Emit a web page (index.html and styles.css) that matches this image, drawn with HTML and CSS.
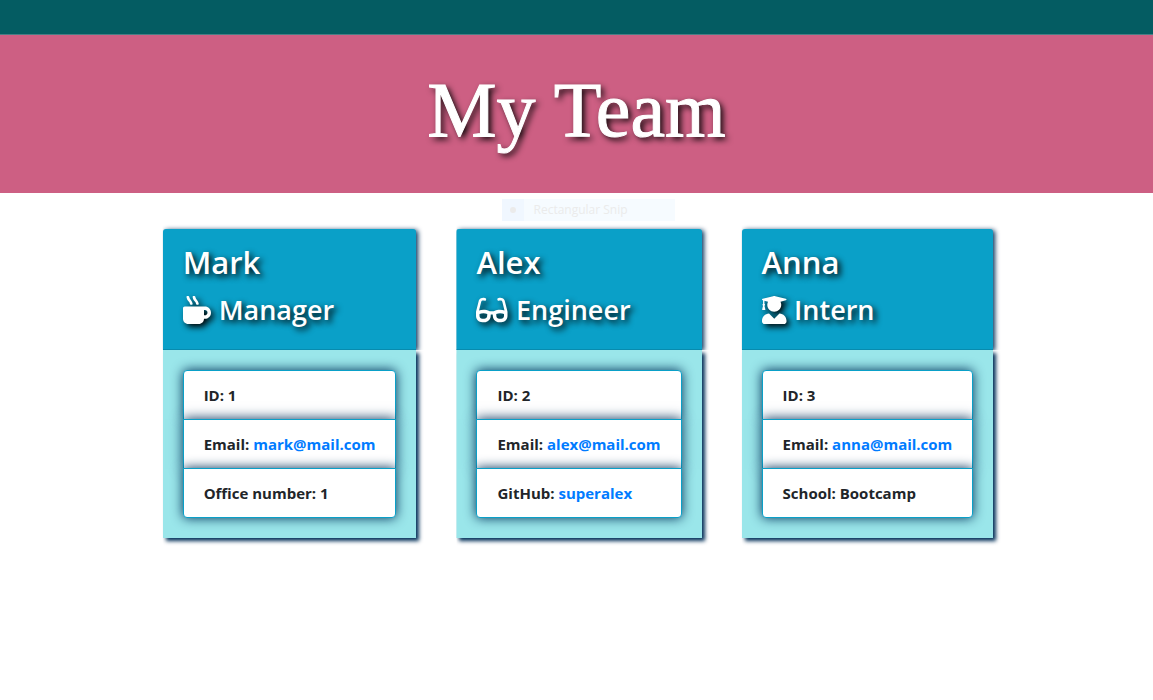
FILE: index.html
```html
<!DOCTYPE html>
<html lang="en">
<head>
<meta charset="utf-8">
<meta name="viewport" content="width=device-width, initial-scale=1">
<title>My Team</title>
<link rel="stylesheet" href="styles.css">
</head>
<body>
<div class="topbar"></div>
<header class="banner"><h1 class="banner-title">My Team</h1></header>
<div class="snip"><span class="snip-mark"><span class="snip-dot"></span></span><span class="snip-label">Rectangular Snip</span></div>
<main class="team">
  <section class="card">
    <div class="card-header">
      <h2 class="name">Mark</h2>
      <h3 class="role"><svg class="icon" viewBox="0 0 512 512" aria-hidden="true"><path d="M127.1 146.5c1.3 7.7 8 13.5 16 13.5h16.5c9.8 0 17.6-8.5 16.3-18-3.8-28.2-16.4-54.2-36.6-74.7-14.4-14.7-23.6-33.3-26.4-53.5C111.8 5.9 105 0 96.8 0H80.4C70.6 0 63 8.5 64.1 18c3.9 31.9 18 61.3 40.6 84.4 12 12.2 19.7 27.5 22.4 44.1zm112 0c1.3 7.7 8 13.5 16 13.5h16.5c9.8 0 17.6-8.5 16.3-18-3.8-28.2-16.4-54.2-36.6-74.7-14.4-14.7-23.6-33.3-26.4-53.5C223.8 5.9 217 0 208.8 0h-16.4c-9.8 0-17.5 8.5-16.3 18 3.9 31.9 18 61.3 40.6 84.4 12 12.2 19.7 27.5 22.4 44.1zM400 192H32c-17.7 0-32 14.3-32 32v192c0 53 43 96 96 96h192c53 0 96-43 96-96h16c61.8 0 112-50.2 112-112s-50.2-112-112-112zm0 160h-16v-96h16c26.5 0 48 21.5 48 48s-21.5 48-48 48z"/></svg>Manager</h3>
    </div>
    <div class="card-body">
      <ul class="details">
        <li class="detail">ID: 1</li>
        <li class="detail">Email: <a class="link" href="mailto:mark@mail.com">mark@mail.com</a></li>
        <li class="detail">Office number: 1</li>
      </ul>
    </div>
  </section>
  <section class="card">
    <div class="card-header">
      <h2 class="name">Alex</h2>
      <h3 class="role"><svg class="icon" viewBox="0 0 576 512" aria-hidden="true"><path d="M574.1 280.37L528.75 98.66c-5.91-23.7-21.59-44.05-43-55.81-21.44-11.73-46.97-14.11-70.19-6.33l-15.25 5.08c-8.39 2.79-12.92 11.86-10.12 20.24l5.06 15.18c2.79 8.38 11.85 12.91 20.23 10.12l13.18-4.39c10.87-3.62 23-3.57 33.16 1.73 10.29 5.37 17.57 14.56 20.37 25.82l38.46 153.82c-22.19-6.81-49.79-12.46-81.2-12.46-34.77 0-73.98 7.02-114.85 26.74h-73.18c-40.87-19.74-80.08-26.75-114.86-26.75-31.42 0-59.02 5.65-81.21 12.46l38.46-153.83c2.79-11.25 10.09-20.45 20.38-25.81 10.16-5.3 22.28-5.35 33.15-1.73l13.17 4.39c8.38 2.79 17.44-1.74 20.23-10.12l5.06-15.18c2.8-8.38-1.73-17.45-10.12-20.24l-15.25-5.08c-23.22-7.78-48.75-5.41-70.19 6.33-21.41 11.77-37.09 32.11-43 55.8L1.9 280.37A64.218 64.218 0 0 0 0 295.86v70.25C0 429.01 51.58 480 115.2 480h37.12c60.28 0 110.37-45.94 114.88-105.37l2.93-38.63h35.75l2.93 38.63C313.31 434.06 363.4 480 423.68 480h37.12c63.62 0 115.2-50.99 115.2-113.88v-70.25c0-5.23-.64-10.43-1.9-15.5zm-370.72 89.42c-1.97 25.91-24.4 46.21-51.06 46.21H115.2C86.97 416 64 393.62 64 366.11v-37.54c18.12-6.49 43.4-12.91 72.58-12.91 23.86 0 47.26 4.33 69.93 12.92l-3.13 41.21zM512 366.12c0 27.51-22.97 49.88-51.2 49.88h-37.12c-26.67 0-49.1-20.3-51.06-46.21l-3.13-41.24c22.67-8.59 46.08-12.95 69.95-12.95 29.17 0 54.43 6.44 72.55 12.93v37.58z"/></svg>Engineer</h3>
    </div>
    <div class="card-body">
      <ul class="details">
        <li class="detail">ID: 2</li>
        <li class="detail">Email: <a class="link" href="mailto:alex@mail.com">alex@mail.com</a></li>
        <li class="detail">GitHub: <a class="link" href="#superalex">superalex</a></li>
      </ul>
    </div>
  </section>
  <section class="card">
    <div class="card-header">
      <h2 class="name">Anna</h2>
      <h3 class="role"><svg class="icon" viewBox="0 0 448 512" aria-hidden="true"><path d="M319.4 320.6L224 416l-95.4-95.4C57.1 323.7 0 382.2 0 454.4v9.6c0 26.5 21.5 48 48 48h352c26.5 0 48-21.5 48-48v-9.6c0-72.2-57.1-130.7-128.6-133.8zM13.6 79.8l6.4 1.5v58.4c-7 4.2-12 11.5-12 20.3 0 8.4 4.6 15.4 11.1 19.7L3.5 242c-1.7 6.9 2.1 14 7.6 14h41.8c5.5 0 9.3-7.1 7.6-14l-15.6-62.3C51.4 175.4 56 168.4 56 160c0-8.8-5-16.1-12-20.3V87.1l66 15.9c-8.6 17.2-14 36.4-14 57 0 70.7 57.3 128 128 128s128-57.3 128-128c0-20.6-5.3-39.8-14-57l96.3-23.2c18.2-4.4 18.2-27.1 0-31.5l-190.4-46c-13-3.1-26.7-3.1-39.7 0L13.6 48.2c-18.1 4.4-18.1 27.2 0 31.6z"/></svg>Intern</h3>
    </div>
    <div class="card-body">
      <ul class="details">
        <li class="detail">ID: 3</li>
        <li class="detail">Email: <a class="link" href="mailto:anna@mail.com">anna@mail.com</a></li>
        <li class="detail">School: Bootcamp</li>
      </ul>
    </div>
  </section>
</main>
</body>
</html>
```
FILE: styles.css
```css
* { box-sizing: border-box; }
body {
  margin: 0;
  background: #fff;
  color: #212529;
  font-family: "Segoe UI", "Open Sans", "Noto Sans", sans-serif;
  font-size: 16px;
  line-height: 24px;
}
h1, h2, h3, ul { margin: 0; padding: 0; font-weight: 600; }
.topbar {
  height: 35px;
  background: #045c62;
  border-bottom: 1px solid #4b7d85;
}
.banner {
  padding: 32px 16px 40px;
  background: #cd5f83;
  text-align: center;
}
.banner-title {
  color: #fff;
  font-family: "Source Serif Pro", "Liberation Serif", serif;
  font-size: 78px;
  font-weight: 400;
  line-height: 86px;
  text-shadow: 3px 3px 6px #000;
  -webkit-text-stroke: 1px #fff;
}
.snip {
  display: flex;
  align-items: center;
  width: 173px;
  height: 22px;
  margin: 6px 0 0 calc(50% - 75px);
  background: #f6fbff;
  color: #ebebeb;
  font-size: 12px;
}
.snip-mark {
  display: flex;
  align-items: center;
  justify-content: center;
  width: 22px;
  height: 22px;
  margin-right: 10px;
  background: #f0f7ff;
}
.snip-dot { width: 6px; height: 6px; border-radius: 50%; background: #ebebeb; }
.team {
  display: flex;
  flex-wrap: wrap;
  justify-content: center;
  gap: 40px;
  padding: 8px 16px 40px 19px;
}
.card-header {
  padding: 14px 20px 18px;
  background: #0aa0c8;
  border-bottom: 1px solid #088bae;
  border-radius: 3px 3px 0 0;
  box-shadow: 2px 1px 5px #023059;
  clip-path: inset(-8px -8px 0 0);
  color: #fff;
  text-shadow: 3px 3px 6px #000;
}
.name { margin-bottom: 8px; font-size: 31px; line-height: 38px; }
.role {
  display: flex;
  align-items: center;
  gap: 8px;
  font-size: 27px;
  line-height: 42px;
}
.icon {
  height: 28px;
  overflow: visible;
  fill: #fff;
  filter: drop-shadow(3px 3px 3px #000);
}
.card-body {
  padding: 20px;
  background: #9ae6ea;
  box-shadow: 3px 3px 4px #023059;
  clip-path: inset(0 -8px -8px 0);
}
.details { list-style: none; }
.detail {
  position: relative;
  padding: 12px 20px;
  background: #fff;
  border: 1px solid #0aa0c8;
  box-shadow: 0 0 12px #023059;
  font-size: 15px;
  font-weight: 700;
}
.detail + .detail { margin-top: -1px; }
.detail:first-child { border-radius: 4px 4px 0 0; }
.detail:last-child { border-radius: 0 0 4px 4px; }
.link { color: #007bff; text-decoration: none; }
```
